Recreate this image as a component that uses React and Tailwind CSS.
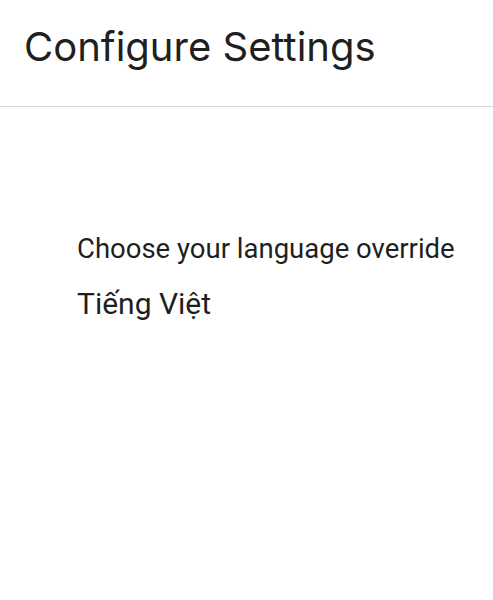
export default function App() {
  return (
    <div className="min-h-[600px] bg-white text-[#1f1f1f]">
      <header className="h-[107px] border-b border-[#cfd6e2] px-6 pt-[22px]">
        <h1 className="text-[40px] leading-[50px] font-normal" style={{ fontFamily: 'Inter, "Noto Sans", sans-serif' }}>
          Configure Settings
        </h1>
      </header>
      <main className="pl-[77px] pt-[125px]" style={{ fontFamily: 'Roboto, "Liberation Sans", sans-serif' }}>
        <p className="text-[27.5px] leading-[34px]">Choose your language override</p>
        <p className="mt-[20px] text-[30px] leading-[36px]">Tiếng Việt</p>
      </main>
    </div>
  );
}
